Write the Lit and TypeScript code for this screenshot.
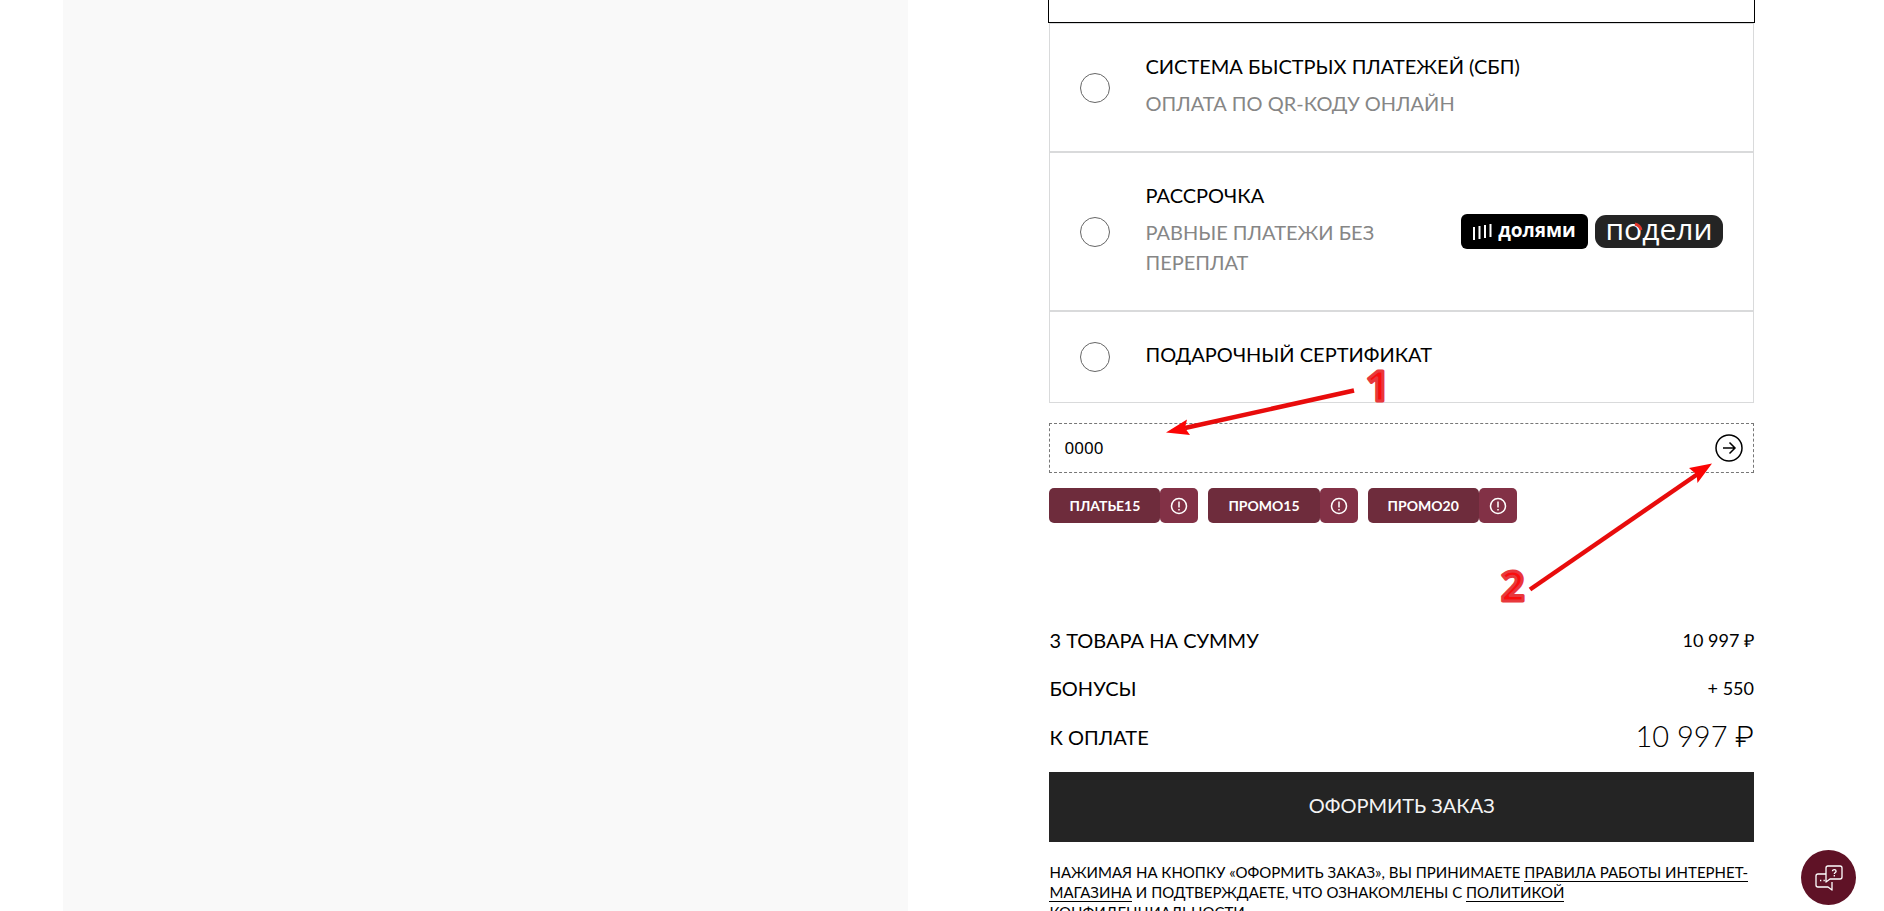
import { LitElement, html, css, svg } from "lit";
import { customElement, property, state } from "lit/decorators.js";

interface Payment {
  id: string;
  title: string;
  text?: string;
  logos?: boolean;
}

const PAYMENTS: Payment[] = [
  { id: "sbp", title: "СИСТЕМА БЫСТРЫХ ПЛАТЕЖЕЙ (СБП)", text: "ОПЛАТА ПО QR-КОДУ ОНЛАЙН" },
  { id: "split", title: "РАССРОЧКА", text: "РАВНЫЕ ПЛАТЕЖИ БЕЗ ПЕРЕПЛАТ", logos: true },
  { id: "gift", title: "ПОДАРОЧНЫЙ СЕРТИФИКАТ" },
];

@customElement("payment-option")
export class PaymentOption extends LitElement {
  @property({ attribute: false }) item!: Payment;

  static styles = css`
    :host {
      display: block;
    }
    .card {
      display: flex;
      align-items: center;
      gap: 35px;
      padding: 27px 30px;
      border: 1px solid #d9dadb;
    }
    .radio {
      appearance: none;
      flex: none;
      width: 30px;
      height: 30px;
      margin: 0;
      border: 1px solid #666;
      border-radius: 50%;
    }
    .radio:checked {
      background: radial-gradient(#222 0 7px, transparent 8px);
    }
    .body {
      flex: 1;
      display: grid;
      gap: 7px;
      padding-bottom: 6px;
    }
    .title {
      font-size: 20px;
      line-height: 30px;
    }
    .text {
      color: #868686;
      font-size: 20px;
      line-height: 30px;
      max-width: 320px;
    }
    .logos {
      display: flex;
      align-items: center;
      gap: 7px;
    }
    .dolyami {
      display: flex;
      align-items: center;
      justify-content: center;
      gap: 6px;
      box-sizing: border-box;
      width: 127px;
      height: 35px;
      border-radius: 6px;
      background: #000;
      color: #fff;
      font: 700 19px/35px "Open Sans", sans-serif;
    }
    .word {
      padding-bottom: 3px;
      line-height: 32px;
    }
    .podeli {
      position: relative;
      display: flex;
      justify-content: center;
      width: 128px;
      height: 33px;
      border-radius: 11px;
      background: #242424;
      color: #fff;
      font: 400 30px/27px "Open Sans", sans-serif;
    }
    .arc {
      position: absolute;
      left: 0;
      top: 0;
    }
  `;

  render() {
    const { id, title, text, logos } = this.item;
    return html`
      <label class="card">
        <input class="radio" type="radio" name="payment" value=${id} />
        <span class="body">
          <span class="title">${title}</span>
          ${text ? html`<span class="text">${text}</span>` : ""}
        </span>
        ${logos
          ? html`<span class="logos">
              <span class="dolyami">
                <svg width="19" height="16" viewBox="0 0 19 16" stroke="#fff" stroke-width="2" aria-hidden="true">
                  <path d="M1 3v13M6.500 2v13M12 1v13M17.500 0v13" />
                </svg>
                <span class="word">долями</span>
              </span>
              <span class="podeli">
                подели
                <svg class="arc" width="128" height="33" viewBox="0 0 128 33" fill="none" aria-hidden="true">
                  <path d="M40 9a8 8 0 0 1 6 6" stroke="#e0352b" stroke-width="3" />
                </svg>
              </span>
            </span>`
          : ""}
      </label>
    `;
  }
}

@customElement("app-root")
export class AppRoot extends LitElement {
  @state() private code = "0000";

  private promos = ["ПЛАТЬЕ15", "ПРОМО15", "ПРОМО20"];

  static styles = css`
    :host {
      display: block;
      height: 100vh;
      overflow: hidden;
      background: #fff;
      color: #000;
      font-family: Lato, "Open Sans", sans-serif;
    }
    .page {
      display: grid;
      grid-template-columns: 6fr 5fr;
      gap: 141px;
      height: 100%;
      padding: 0 130px 0 63px;
    }
    .side {
      background: #f9f9f9;
    }
    .order {
      position: relative;
      min-width: 0;
    }
    .selected {
      height: 22px;
      margin: 0 -1px;
      border: 1px solid #000;
      border-top: 0;
    }
    .promo {
      display: flex;
      align-items: center;
      margin-top: 20px;
      padding: 0 10px 0 14px;
      height: 48px;
      border: 1px dashed #777;
    }
    .code {
      flex: 1;
      min-width: 0;
      padding: 0;
      border: 0;
      outline: 0;
      background: none;
      color: #000;
      font: 17px/24px "Noto Sans", sans-serif;
    }
    .send {
      display: flex;
      padding: 0;
      border: 0;
      background: none;
    }
    .chips {
      display: flex;
      gap: 10px;
      margin-top: 15px;
    }
    .pair {
      display: flex;
    }
    .chip,
    .info {
      height: 35px;
      border: 0;
      border-radius: 5px;
      color: #fff;
    }
    .chip {
      padding: 0 20px;
      background: #6e2c3c;
      font: 700 14px/35px Lato, sans-serif;
    }
    .info {
      display: grid;
      place-items: center;
      width: 38px;
      padding: 0;
      background: #823146;
    }
    .sums {
      display: grid;
      gap: 18px;
      margin: 102px 0 0;
    }
    .row {
      display: flex;
      justify-content: space-between;
      align-items: center;
      font-size: 20px;
      line-height: 30px;
    }
    .row dd {
      margin: 0;
      font-size: 18px;
    }
    .row .total {
      font-size: 29px;
      font-weight: 300;
    }
    .total .rub {
      font-family: Roboto, Inter, sans-serif;
      font-weight: 300;
    }
    .submit {
      display: block;
      width: 100%;
      height: 70px;
      margin-top: 20px;
      padding: 0 0 4px;
      border: 0;
      background: #242424;
      color: #f4f4f4;
      font: 20px/30px Lato, sans-serif;
    }
    .legal {
      margin: 20px 0 0;
      font-size: 15px;
      line-height: 20px;
    }
    .legal a {
      color: inherit;
      text-decoration: none;
      border-bottom: 1px solid #000;
    }
    .marks {
      position: absolute;
      left: 0;
      top: 360px;
      overflow: visible;
      pointer-events: none;
    }
    .num {
      font: 700 41px "Open Sans", sans-serif;
      fill: #fb0d0d;
      stroke: #e8383c;
      stroke-width: 3px;
      stroke-linejoin: round;
    }
    .chat {
      position: fixed;
      right: 28px;
      bottom: 6px;
      display: grid;
      place-items: center;
      width: 55px;
      height: 55px;
      padding: 0;
      border: 0;
      border-radius: 50%;
      background: #5f1226;
    }
  `;

  private marks() {
    return svg`
      <svg class="marks" width="705" height="250" viewBox="0 0 705 250" aria-hidden="true">
        <g stroke="#e80c0c" stroke-width="4.500">
          <path d="M305 30.500 L136 68" />
          <path d="M481 229.500 L648 114.500" />
        </g>
        <g fill="#fb0505">
          <path d="M117 72.500 L138 59.500 L136 68 L141 75Z" />
          <path d="M663 103.500 L640 108 L647.500 114.500 L648.500 123Z" />
        </g>
        <text class="num" x="317" y="41">1</text>
        <text class="num" x="452" y="241">2</text>
      </svg>`;
  }

  render() {
    return html`
      <div class="page">
        <aside class="side"></aside>
        <main class="order">
          <div class="selected"></div>
          ${PAYMENTS.map((p) => html`<payment-option .item=${p}></payment-option>`)}
          <form class="promo" @submit=${(e: Event) => e.preventDefault()}>
            <input
              class="code"
              aria-label="Промокод"
              .value=${this.code}
              @input=${(e: Event) => (this.code = (e.target as HTMLInputElement).value)}
            />
            <button class="send" aria-label="Применить">
              <svg width="28" height="28" viewBox="0 0 28 28" fill="none" stroke="#000">
                <circle cx="14" cy="14" r="13" stroke-width="1.500" />
                <path d="M8 14h12M14.500 8.500l5.500 5.500-5.500 5.500" stroke-width="1.500" />
              </svg>
            </button>
          </form>
          <div class="chips">
            ${this.promos.map(
              (p) => html`<div class="pair">
                <button class="chip" @click=${() => (this.code = p)}>${p}</button>
                <button class="info" aria-label="Условия">
                  <svg width="18" height="18" viewBox="0 0 18 18" fill="none" stroke="#fff" stroke-width="1.500">
                    <circle cx="9" cy="9" r="7.500" />
                    <path d="M9 4.500v6M9 12v1.500" />
                  </svg>
                </button>
              </div>`
            )}
          </div>
          <dl class="sums">
            <div class="row"><dt>3 ТОВАРА НА СУММУ</dt><dd>10 997 ₽</dd></div>
            <div class="row"><dt>БОНУСЫ</dt><dd>+ 550</dd></div>
            <div class="row"><dt>К ОПЛАТЕ</dt><dd class="total">10 997 <span class="rub">₽</span></dd></div>
          </dl>
          <button class="submit">ОФОРМИТЬ ЗАКАЗ</button>
          <p class="legal">
            НАЖИМАЯ НА КНОПКУ «ОФОРМИТЬ ЗАКАЗ», ВЫ ПРИНИМАЕТЕ <a href="#rules">ПРАВИЛА РАБОТЫ ИНТЕРНЕТ-МАГАЗИНА</a> И
            ПОДТВЕРЖДАЕТЕ, ЧТО ОЗНАКОМЛЕНЫ С <a href="#privacy">ПОЛИТИКОЙ КОНФИДЕНЦИАЛЬНОСТИ</a>
          </p>
          ${this.marks()}
        </main>
      </div>
      <button class="chat" aria-label="Чат">
        <svg width="28" height="26" viewBox="0 0 28 26" fill="none" stroke="#fff" stroke-width="1.300" stroke-linejoin="round">
          <path d="M11 9H3a2 2 0 0 0-2 2v9a2 2 0 0 0 2 2h10l4 3v-3v-5" />
          <path d="M13 1h12a2 2 0 0 1 2 2v9a2 2 0 0 1-2 2h-10l-4 3v-14a2 2 0 0 1 2-2z" />
          <path d="M17.500 6.200c0-2.200 3.600-2.200 3.600 0 0 1.300-1.800 1.200-1.800 2.800M19.300 10v1.500" />
          <path d="M5 15.500h1.300M8.500 15.500h1.300" />
        </svg>
      </button>
    `;
  }
}
